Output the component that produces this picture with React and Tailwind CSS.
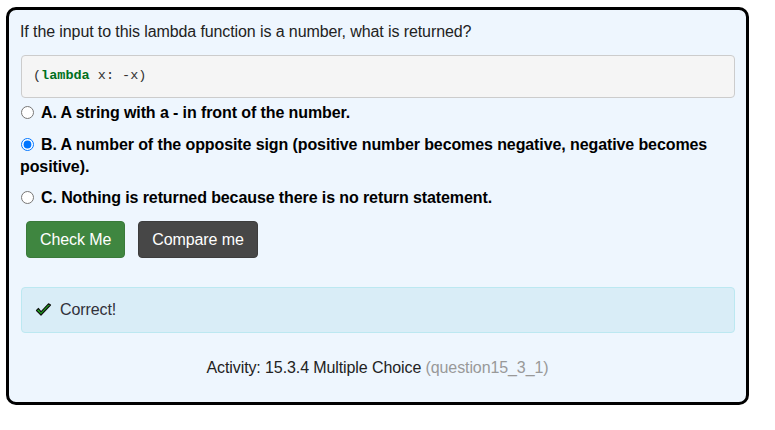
import React from "react";

const options = [
  { id: "A", text: "A. A string with a - in front of the number.", gap: "mt-0" },
  {
    id: "B",
    text: "B. A number of the opposite sign (positive number becomes negative, negative becomes positive).",
    gap: "mt-[10px]",
  },
  { id: "C", text: "C. Nothing is returned because there is no return statement.", gap: "mt-[9px]" },
];

function CheckIcon() {
  return (
    <svg width="17" height="14" viewBox="0 0 17 14" className="shrink-0">
      <path
        d="M1.5 7.5 L6 12 L15.5 2 L13.5 0.8 L6 8.8 L3.5 5.5 Z"
        fill="#1fb51f"
        stroke="#111"
        strokeWidth="1.2"
        strokeLinejoin="round"
      />
    </svg>
  );
}

export default function App() {
  return (
    <div className="pl-[6px] pt-[7px] font-['Liberation_Sans',Arial,sans-serif] text-[16px] tracking-[-0.1px] text-[#222]">
      <div className="w-[743px] h-[398px] rounded-[10px] border-[3px] border-black bg-[#eef6fe] px-[11px] pt-[11px]">
        {/* Question */}
        <p className="leading-[22px] text-[#222]">
          If the input to this lambda function is a number, what is returned?
        </p>

        <pre className="mt-[12px] ml-[1px] h-[43px] rounded-[4px] border border-[#ccc] bg-[#f5f5f5] px-[11px] pt-[11px] font-['Liberation_Mono',monospace] text-[13.5px] leading-[18px] tracking-normal text-[#333]">
          (<span className="font-bold text-[#007020]">lambda</span> x: -x)
        </pre>

        {/* Options */}
        <div className="mt-[4px] flex flex-col">
          {options.map((o) => (
            <label key={o.id} className={`${o.gap} block font-bold leading-[22px] text-black`}>
              <input
                type="radio"
                name="q"
                readOnly
                checked={o.id === "B"}
                className="mr-[7px] ml-[1px] inline-block h-[13px] w-[13px] align-[-1px] accent-[#0075ff]"
              />
              {o.text}
            </label>
          ))}
        </div>

        {/* Buttons */}
        <div className="mt-[12px] flex gap-[13px] pl-[6px]">
          <button
            type="button"
            className="h-[37px] rounded-[4px] border border-[#3a7a3a] bg-[#3f8640] px-[13px] text-[16px] text-white"
          >
            Check Me
          </button>
          <button
            type="button"
            className="h-[37px] rounded-[4px] border border-[#3d3d3d] bg-[#474747] px-[13px] text-[16px] text-white"
          >
            Compare me
          </button>
        </div>

        {/* Feedback */}
        <div className="mt-[29px] ml-[1px] flex h-[46px] items-center gap-[8px] rounded-[4px] border border-[#bce8f1] bg-[#d9edf7] pl-[13px] text-[#31313a]">
          <CheckIcon />
          <span className="leading-[22px]">Correct!</span>
        </div>

        {/* Footer */}
        <p className="mt-[24px] text-center leading-[22px] text-[#222]">
          Activity: 15.3.4 Multiple Choice{" "}
          <span className="text-[#999]">(question15_3_1)</span>
        </p>
      </div>
    </div>
  );
}
